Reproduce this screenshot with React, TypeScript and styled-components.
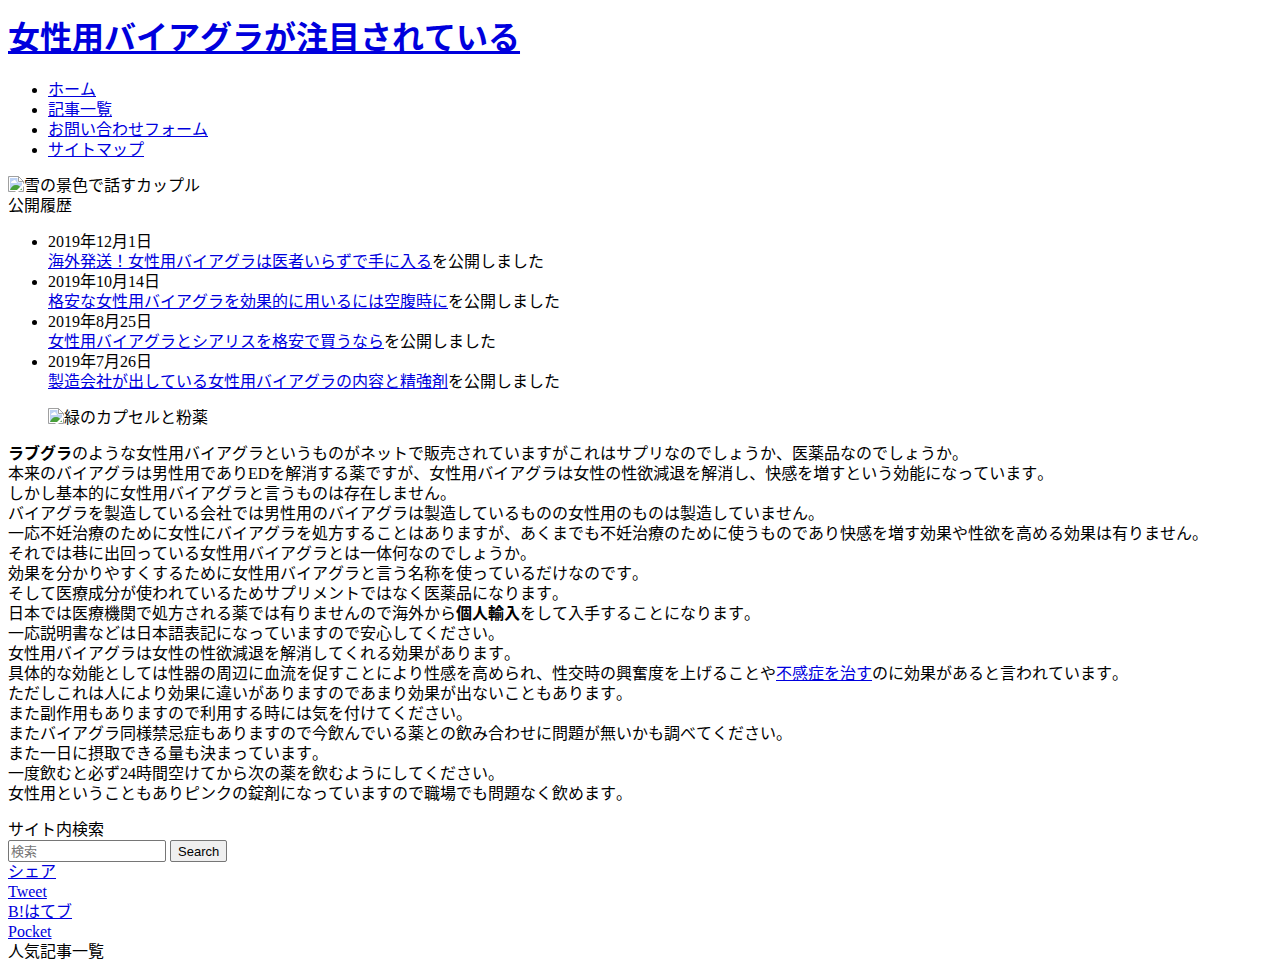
import React from 'react';
import styled, { createGlobalStyle } from 'styled-components';

const GlobalStyle = createGlobalStyle`
  body {
    margin: 8px;
    background: #fff;
    color: #000;
    font-family: "Liberation Serif", "Noto Sans CJK JP", serif;
    font-size: 16px;
    line-height: 20px;
    font-kerning: none;
  }
`;

const Link = styled.a`
  color: #0000dd;
  text-decoration: underline;
`;

const Title = styled.h1`
  margin: 0;
  padding-top: 4px;
  font-size: 32px;
  line-height: 52px;
`;

const List = styled.ul`
  margin: 16px 0;
  padding-left: 40px;
`;

const Figure = styled.figure`
  margin: 16px 40px;
`;

const MissingImage = styled.div`
  display: flex;
`;

const BrokenIcon = styled.svg`
  flex: none;
  width: 16px;
  height: 16px;
`;

const Article = styled.p`
  margin: 16px 0;
`;

const SearchForm = styled.form`
  display: flex;
  gap: 4px;
`;

const SearchInput = styled.input`
  box-sizing: border-box;
  width: 158px;
  height: 22px;
  padding: 1px 2px;
  border: 1px solid #767676;
  border-radius: 2px;
  background: #fff;
  font-family: "Liberation Sans", "Noto Sans CJK JP", sans-serif;
  font-size: 13px;

  &::placeholder {
    color: #757575;
  }
`;

const SearchButton = styled.button`
  height: 22px;
  padding: 1px 7px;
  border: 1px solid #767676;
  border-radius: 2px;
  background: #efefef;
  color: #000;
  font-family: "Liberation Sans", sans-serif;
  font-size: 13px;
`;

const ShareItem = styled.div`
  font-kerning: normal;
`;

const navigation = ['ホーム', '記事一覧', 'お問い合わせフォーム', 'サイトマップ'];

const history = [
  { date: '2019年12月1日', title: '海外発送！女性用バイアグラは医者いらずで手に入る' },
  { date: '2019年10月14日', title: '格安な女性用バイアグラを効果的に用いるには空腹時に' },
  { date: '2019年8月25日', title: '女性用バイアグラとシアリスを格安で買うなら' },
  { date: '2019年7月26日', title: '製造会社が出している女性用バイアグラの内容と精強剤' },
];

const shares = ['シェア', 'Tweet', 'B!はてブ', 'Pocket'];

function Missing({ alt }: { alt: string }) {
  return (
    <MissingImage>
      <BrokenIcon viewBox="0 0 16 16" aria-hidden="true">
        <path d="M0.5 0.5H10.5L15.5 5.5V15.5H0.5Z" fill="#bdd2f5" stroke="#a0a0a0" />
        <path d="M1.5 1.5H10V6H14.5V14.5H1.5Z" fill="none" stroke="#ffffff" />
        <path d="M3 7C3 5.500 4 5 5 5C5.500 3.500 8 4 8 5.500C9 5.500 9 7 8.500 7Z" fill="#ffffff" />
        <path d="M2 14C3 11 5 9 8 9C11 9 13 11 14 14Z" fill="#48a03a" />
        <path d="M10.5 0.5V5.5H15.5Z" fill="#ffffff" stroke="#a0a0a0" />
        <path d="M16 7V10L10 16H7Z" fill="#ffffff" />
      </BrokenIcon>
      <span>{alt}</span>
    </MissingImage>
  );
}

export default function App() {
  return (
    <div lang="ja">
      <GlobalStyle />
      <header>
        <Title><Link href="#">女性用バイアグラが注目されている</Link></Title>
        <nav>
          <List>
            {navigation.map((label) => (
              <li key={label}><Link href="#">{label}</Link></li>
            ))}
          </List>
        </nav>
      </header>
      <Missing alt="雪の景色で話すカップル" />
      <section>
        <div>公開履歴</div>
        <List>
          {history.map(({ date, title }) => (
            <li key={date}>
              {date}<br />
              <Link href="#">{title}</Link>を公開しました
            </li>
          ))}
        </List>
      </section>
      <main>
        <Figure><Missing alt="緑のカプセルと粉薬" /></Figure>
        <Article>
          <strong>ラブグラ</strong>のような女性用バイアグラというものがネットで販売されていますがこれはサプリなのでしょうか、医薬品なのでしょうか。<br />
          本来のバイアグラは男性用でありEDを解消する薬ですが、女性用バイアグラは女性の性欲減退を解消し、快感を増すという効能になっています。<br />
          しかし基本的に女性用バイアグラと言うものは存在しません。<br />
          バイアグラを製造している会社では男性用のバイアグラは製造しているものの女性用のものは製造していません。<br />
          一応不妊治療のために女性にバイアグラを処方することはありますが、あくまでも不妊治療のために使うものであり快感を増す効果や性欲を高める効果は有りません。<br />
          それでは巷に出回っている女性用バイアグラとは一体何なのでしょうか。<br />
          効果を分かりやすくするために女性用バイアグラと言う名称を使っているだけなのです。<br />
          そして医療成分が使われているためサプリメントではなく医薬品になります。<br />
          日本では医療機関で処方される薬では有りませんので海外から<strong>個人輸入</strong>をして入手することになります。<br />
          一応説明書などは日本語表記になっていますので安心してください。<br />
          女性用バイアグラは女性の性欲減退を解消してくれる効果があります。<br />
          具体的な効能としては性器の周辺に血流を促すことにより性感を高められ、性交時の興奮度を上げることや<Link href="#">不感症を治す</Link>のに効果があると言われています。<br />
          ただしこれは人により効果に違いがありますのであまり効果が出ないこともあります。<br />
          また副作用もありますので利用する時には気を付けてください。<br />
          またバイアグラ同様禁忌症もありますので今飲んでいる薬との飲み合わせに問題が無いかも調べてください。<br />
          また一日に摂取できる量も決まっています。<br />
          一度飲むと必ず24時間空けてから次の薬を飲むようにしてください。<br />
          女性用ということもありピンクの錠剤になっていますので職場でも問題なく飲めます。
        </Article>
      </main>
      <aside>
        <label htmlFor="site-search">サイト内検索</label>
        <SearchForm role="search">
          <SearchInput id="site-search" type="text" placeholder="検索" />
          <SearchButton type="submit">Search</SearchButton>
        </SearchForm>
        {shares.map((label) => (
          <ShareItem key={label}><Link href="#">{label}</Link></ShareItem>
        ))}
        <div>人気記事一覧</div>
      </aside>
    </div>
  );
}
